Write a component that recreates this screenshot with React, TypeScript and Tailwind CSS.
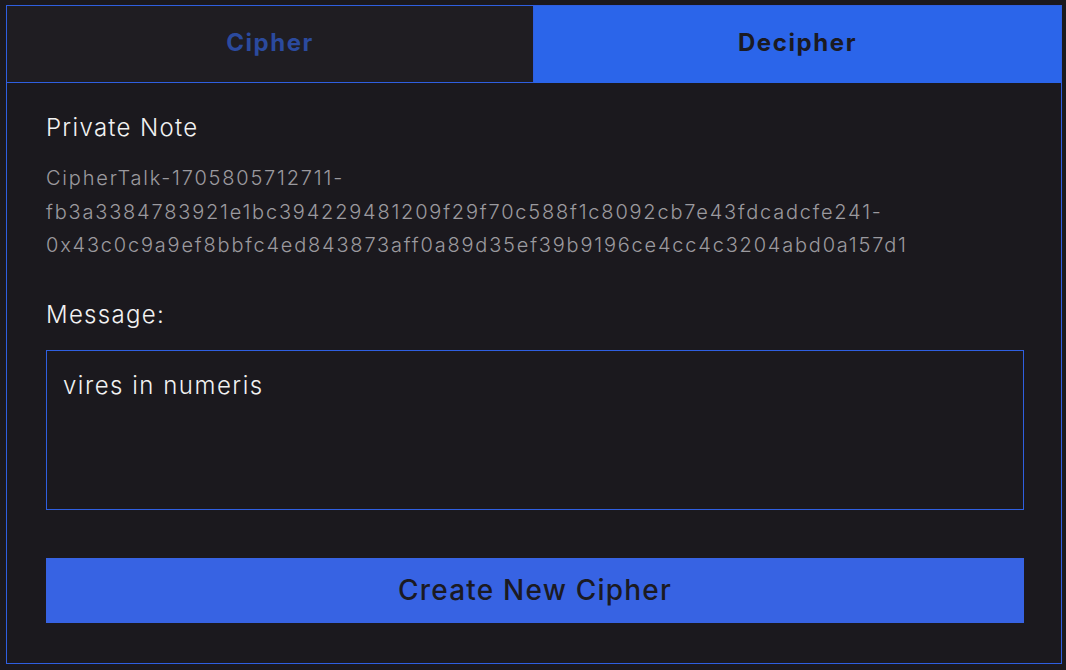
const noteLines = [
  "CipherTalk-1705805712711-",
  "fb3a3384783921e1bc394229481209f29f70c588f1c8092cb7e43fdcadcfe241-",
  "0x43c0c9a9ef8bbfc4ed843873aff0a89d35ef39b9196ce4cc4c3204abd0a157d1",
];

const App = () => {
  return (
    <div
      className="w-[1066px] h-[670px] bg-[#1b191e] pt-[5px] pl-[6px]"
      style={{ fontFamily: "Inter, 'Noto Sans', sans-serif" }}
    >
      <div className="w-[1056px] h-[659px] border border-[#2f5fe0] flex flex-col">
        <div className="grid grid-cols-2 h-[77px]">
          <button className="bg-[#1f1d22] border-b border-r border-[#2f5fe0] pb-[2px] text-[24px] font-bold tracking-[1.5px] text-[#2b4a9e] cursor-pointer">
            Cipher
          </button>
          <button className="bg-[#2b65ea] pb-[3px] text-[24px] font-bold tracking-[1.6px] text-[#1b1a22] cursor-pointer">
            Decipher
          </button>
        </div>

        <div className="flex-1 pl-[39px] pr-[37px] pt-[27px]">
          <h2 className="text-[24px] font-light tracking-[1.3px] text-[#f2f2f2] leading-[36px]">
            Private Note
          </h2>
          <p className="mt-[16px] text-[20px] font-light tracking-[1.8px] text-[#9b9a9f] leading-[33.5px]">
            {noteLines.map((line) => (
              <span key={line} className="block">
                {line}
              </span>
            ))}
          </p>

          <label className="block mt-[34px] text-[24px] font-light tracking-[1.3px] text-[#f2f2f2] leading-[36px]">
            Message:
          </label>
          <div className="mt-[17px] h-[160px] border border-[#2f5fe0] px-[16px] pt-[17px]">
            <p className="text-[24px] font-light tracking-[1.5px] text-[#f2f2f2] leading-[36px]">
              vires in numeris
            </p>
          </div>

          <button className="mt-[48px] w-full h-[65px] bg-[#3763e3] text-[28px] font-medium tracking-[1.2px] text-[#1b1a22] cursor-pointer">
            Create New Cipher
          </button>
        </div>
      </div>
    </div>
  );
};

export default App;
